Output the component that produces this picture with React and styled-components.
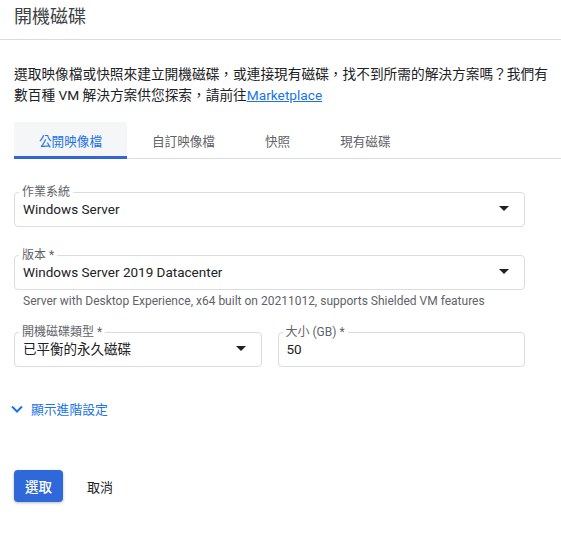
import styled, { createGlobalStyle } from 'styled-components';

const GlobalStyle = createGlobalStyle`
	body {
		margin: 0;
		background: #fff;
		font-family: Roboto, "Noto Sans CJK TC", sans-serif;
		color: #202124;
	}
`;

const SPage = styled.div`
	width: 561px;
	height: 539px;
	overflow: hidden;
`;

const SHeader = styled.header`
	height: 40px;
	box-sizing: border-box;
	padding: 5px 14px 0;
	border-bottom: 1px solid #dadce0;
	font-size: 18px;
	line-height: 24px;
	color: #3c4043;
`;

const SBody = styled.div`
	padding: 24px 0 0 14px;
`;

const SIntro = styled.p`
	margin: 0;
	max-width: 536px;
	font-size: 13.7px;
	line-height: 21px;
`;

const SLink = styled.a`
	color: #1a73e8;
	text-decoration: underline;
`;

const STabs = styled.div`
	display: flex;
	margin-top: 16px;
	border-bottom: 1px solid #dadce0;
`;

const STab = styled.div`
	padding: 0 25px;
	height: 37px;
	display: flex;
	align-items: center;
	font-size: 12.6px;
	box-sizing: border-box;
	color: ${({ active }) => (active ? '#1a73e8' : '#5f6368')};
	background: ${({ active }) => (active ? '#f5f6f7' : 'transparent')};
	border-bottom: 3px solid ${({ active }) => (active ? '#3367d6' : 'transparent')};
	margin-bottom: -1px;
	padding-top: 3px;
`;

const SForm = styled.div`
	padding-top: 26px;
	padding-right: 36px;
	display: flex;
	flex-direction: column;
`;

const SRow = styled.div`
	display: flex;
	gap: 16px;
	margin-top: ${({ top }) => top || 0}px;
`;

const SField = styled.fieldset`
	flex: 1;
	margin: 0;
	padding: 0 8px 0 8px;
	height: 42px;
	box-sizing: border-box;
	border: 1px solid #dadce0;
	border-radius: 4px;
	display: flex;
	align-items: center;
	min-width: 0;
`;

const SLegend = styled.legend`
	font-size: 12px;
	line-height: 14px;
	color: #5f6368;
	padding: 0 3px;
	margin-left: -4px;
`;

const SValue = styled.div`
	flex: 1;
	font-size: 13.5px;
	line-height: 18px;
	margin-top: -8px;
	white-space: nowrap;
`;

const SCaret = styled.span`
	width: 0;
	height: 0;
	border-left: 5px solid transparent;
	border-right: 5px solid transparent;
	border-top: 5px solid #202124;
	margin: -8px 7px 0 0;
`;

const SHint = styled.div`
	font-size: 12px;
	color: #5f6368;
	padding: 4px 0 0 9px;
	line-height: 14px;
`;

const SAdvanced = styled.div`
	display: flex;
	align-items: center;
	gap: 8px;
	margin-top: 32px;
	margin-left: -3px;
	color: #1a73e8;
	font-size: 12.8px;
`;

const SActions = styled.div`
	display: flex;
	align-items: center;
	gap: 24px;
	margin-top: 52px;
`;

const SPrimary = styled.button`
	height: 32px;
	padding: 0 11px;
	border: none;
	border-radius: 4px;
	background: #2f68d8;
	color: #fff;
	font-family: inherit;
	font-size: 13.5px;
	font-weight: 500;
	box-shadow: 0 1px 3px rgba(60, 64, 67, 0.35);
`;

const SCancel = styled.button`
	border: none;
	background: none;
	padding: 0;
	font-family: inherit;
	font-size: 13px;
	color: #202124;
`;

const Select = ({ label, value, caret }) => (
	<SField>
		<SLegend>{label}</SLegend>
		<SValue>{value}</SValue>
		{caret && <SCaret />}
	</SField>
);

const App = () => (
	<SPage>
		<GlobalStyle />
		<SHeader>開機磁碟</SHeader>
		<SBody>
			<SIntro>
				選取映像檔或快照來建立開機磁碟，或連接現有磁碟，找不到所需的解決方案嗎？我們有數百種 VM 解決方案供您探索，請前往
				<SLink>Marketplace</SLink>
			</SIntro>
			<STabs>
				<STab active>公開映像檔</STab>
				<STab>自訂映像檔</STab>
				<STab>快照</STab>
				<STab>現有磁碟</STab>
			</STabs>
			<SForm>
				<SRow>
					<Select label="作業系統" value="Windows Server" caret />
				</SRow>
				<SRow top={21}>
					<Select label="版本 *" value="Windows Server 2019 Datacenter" caret />
				</SRow>
				<SHint>Server with Desktop Experience, x64 built on 20211012, supports Shielded VM features</SHint>
				<SRow top={17}>
					<Select label="開機磁碟類型 *" value="已平衡的永久磁碟" caret />
					<Select label="大小 (GB) *" value="50" />
				</SRow>
				<SAdvanced>
					<svg width="12" height="8" viewBox="0 0 12 8">
						<path d="M1 1.5 L6 6.5 L11 1.5" fill="none" stroke="#1a73e8" strokeWidth="2" />
					</svg>
					顯示進階設定
				</SAdvanced>
				<SActions>
					<SPrimary>選取</SPrimary>
					<SCancel>取消</SCancel>
				</SActions>
			</SForm>
		</SBody>
	</SPage>
);

export default App;
